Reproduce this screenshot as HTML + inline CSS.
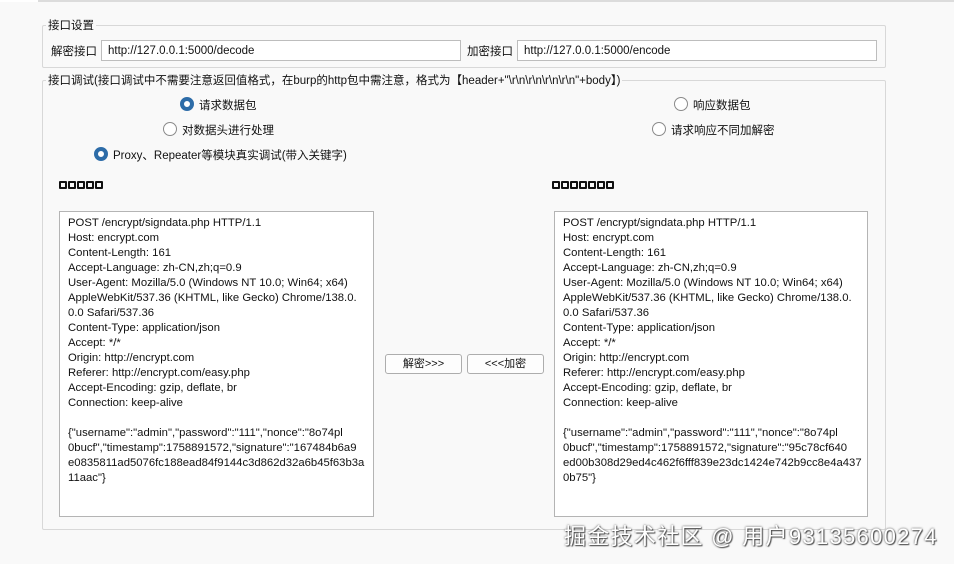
<!DOCTYPE html>
<html><head><meta charset="utf-8"><style>
*{box-sizing:border-box;margin:0;padding:0}
body{width:954px;height:564px;background:#f9f9f9;font-family:"Liberation Sans","Noto Sans CJK SC",sans-serif;font-size:11.5px;color:#111;position:relative;overflow:hidden}
.a{position:absolute;white-space:nowrap}
.fs{position:absolute;border:1px solid #d8d8d8;border-radius:2px}
.lg{position:absolute;background:#f9f9f9;padding:0 2px;font-size:11.5px}
.in{position:absolute;background:#fff;border:1px solid #bdbdbd;height:21px;line-height:21px;padding-left:6px}
.r{position:absolute;width:14px;height:14px;border-radius:50%;border:1px solid #8a8a8a;background:#fff}
.r.on{border:4px solid #2d6ca8}
.ta{position:absolute;background:#fff;border:1px solid #b4b4b4;padding:4px 0 0 8px;line-height:15px;white-space:pre;font-size:11.3px}
.bt{position:absolute;border:1px solid #adadad;border-radius:3px;background:#fdfdfd;height:20px;line-height:18px;text-align:center;font-size:11px}
.sq{position:absolute;display:flex;gap:1px}
.sq i{display:block;width:8px;height:8px;border:2px solid #111;border-radius:1px}
</style></head><body>
<div style="position:absolute;left:0;top:0;width:954px;height:2px;background:#dcdcdc"></div>
<div style="position:absolute;left:0;top:0;width:38px;height:2px;background:#fff"></div>
<div class="fs" style="left:42px;top:25px;width:844px;height:43px"></div>
<div class="lg" style="left:46px;top:17px">接口设置</div>
<div class="a" style="left:51px;top:43px">解密接口</div>
<div class="in" style="left:101px;top:40px;width:360px">http://127.0.0.1:5000/decode</div>
<div class="a" style="left:467px;top:43px">加密接口</div>
<div class="in" style="left:517px;top:40px;width:360px">http://127.0.0.1:5000/encode</div>
<div class="fs" style="left:42px;top:80px;width:844px;height:450px"></div>
<div class="lg" style="left:46px;top:72px">接口调试(接口调试中不需要注意返回值格式，在burp的http包中需注意，格式为【header+"\r\n\r\n\r\n\r\n"+body】)</div>
<div class="r on" style="left:180px;top:97px"></div><div class="a" style="left:199px;top:97px">请求数据包</div>
<div class="r" style="left:163px;top:122px"></div><div class="a" style="left:182px;top:122px">对数据头进行处理</div>
<div class="r on" style="left:94px;top:147px"></div><div class="a" style="left:113px;top:147px">Proxy、Repeater等模块真实调试(带入关键字)</div>
<div class="r" style="left:674px;top:97px"></div><div class="a" style="left:693px;top:97px">响应数据包</div>
<div class="r" style="left:652px;top:122px"></div><div class="a" style="left:671px;top:122px">请求响应不同加解密</div>
<div class="sq" style="left:59px;top:181px"><i></i><i></i><i></i><i></i><i></i></div>
<div class="sq" style="left:552px;top:181px"><i></i><i></i><i></i><i></i><i></i><i></i><i></i></div>
<div class="ta" style="left:59px;top:211px;width:315px;height:306px">POST /encrypt/signdata.php HTTP/1.1
Host: encrypt.com
Content-Length: 161
Accept-Language: zh-CN,zh;q=0.9
User-Agent: Mozilla/5.0 (Windows NT 10.0; Win64; x64)
AppleWebKit/537.36 (KHTML, like Gecko) Chrome/138.0.
0.0 Safari/537.36
Content-Type: application/json
Accept: */*
Origin: http://encrypt.com
Referer: http://encrypt.com/easy.php
Accept-Encoding: gzip, deflate, br
Connection: keep-alive

{"username":"admin","password":"111","nonce":"8o74pl
0bucf","timestamp":1758891572,"signature":"167484b6a9
e0835811ad5076fc188ead84f9144c3d862d32a6b45f63b3a
11aac"}</div>
<div class="ta" style="left:554px;top:211px;width:314px;height:306px">POST /encrypt/signdata.php HTTP/1.1
Host: encrypt.com
Content-Length: 161
Accept-Language: zh-CN,zh;q=0.9
User-Agent: Mozilla/5.0 (Windows NT 10.0; Win64; x64)
AppleWebKit/537.36 (KHTML, like Gecko) Chrome/138.0.
0.0 Safari/537.36
Content-Type: application/json
Accept: */*
Origin: http://encrypt.com
Referer: http://encrypt.com/easy.php
Accept-Encoding: gzip, deflate, br
Connection: keep-alive

{"username":"admin","password":"111","nonce":"8o74pl
0bucf","timestamp":1758891572,"signature":"95c78cf640
ed00b308d29ed4c462f6fff839e23dc1424e742b9cc8e4a437
0b75"}</div>
<div class="bt" style="left:385px;top:354px;width:77px">解密&gt;&gt;&gt;</div>
<div class="bt" style="left:467px;top:354px;width:77px">&lt;&lt;&lt;加密</div>
<div class="a" style="left:564px;top:519px;font-size:22px;letter-spacing:1.3px;color:#fff;text-shadow:0 0 2px #444,1px 1px 1px #555">掘金技术社区 @ 用户93135600274</div>
</body></html>
